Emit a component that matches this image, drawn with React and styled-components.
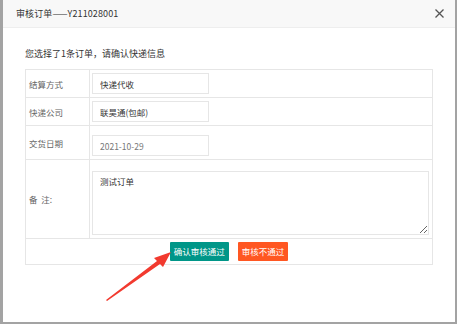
import React from 'react';
import styled, { createGlobalStyle } from 'styled-components';

const GlobalStyle = createGlobalStyle`
	html, body {
		margin: 0;
		padding: 0;
		background: #a3a3a3;
		font-family: "Microsoft YaHei", "Noto Sans CJK SC", "Liberation Sans", sans-serif;
	}
`;

const ROWS = [
	{ label: '结算方式', value: '快递代收', height: 28 },
	{ label: '快递公司', value: '联昊通(包邮)', height: 28 },
	{ label: '交货日期', value: '2021-10-29', height: 34, muted: true },
];

const App = () => {
	return (
		<>
			<GlobalStyle />
			<Page>
				<Modal>
					<Header>
						<Title>审核订单——Y211028001</Title>
						<CloseButton aria-label="close">
							<svg width="9" height="9" viewBox="0 0 9 9">
								<path d="M0.5 0.5 L8.5 8.5 M8.5 0.5 L0.5 8.5" stroke="#555" strokeWidth="1.3" />
							</svg>
						</CloseButton>
					</Header>
					<Body>
						<Intro>您选择了1条订单，请确认快递信息</Intro>
						<Table>
							<tbody>
								{ROWS.map(row => (
									<Row key={row.label} height={row.height}>
										<LabelCell>{row.label}</LabelCell>
										<FieldCell>
											<Input readOnly value={row.value} muted={row.muted} />
										</FieldCell>
									</Row>
								))}
								<Row height={79}>
									<LabelCell>备&nbsp;&nbsp;注:</LabelCell>
									<FieldCell>
										<Remark readOnly defaultValue="测试订单" />
									</FieldCell>
								</Row>
								<Row height={26}>
									<ActionCell colSpan={2}>
										<Actions>
											<ActionButton color="#009688">确认审核通过</ActionButton>
											<ActionButton color="#ff5722">审核不通过</ActionButton>
										</Actions>
									</ActionCell>
								</Row>
							</tbody>
						</Table>
					</Body>
					<Arrow width="70" height="52" viewBox="0 0 70 52">
						<polygon points="1,50 52,11 49,8 66,2 58,17 55,14 2,51" fill="#f23a2f" />
					</Arrow>
				</Modal>
			</Page>
		</>
	);
};

const Page = styled.div`
	width: 457px;
	height: 324px;
	padding-left: 3px;
	box-sizing: border-box;
`;

const Modal = styled.div`
	position: relative;
	width: 452px;
	height: 322px;
	background: #fff;
	display: flex;
	flex-direction: column;
`;

const Header = styled.div`
	height: 27px;
	display: flex;
	align-items: center;
	justify-content: space-between;
	padding: 0 10px 0 13px;
	background: #f8f8f8;
	border-bottom: 1px solid #eee;
`;

const Title = styled.div`
	font-size: 9px;
	color: #333;
	letter-spacing: 0.1px;
`;

const CloseButton = styled.div`
	display: flex;
	align-items: center;
	justify-content: center;
	width: 12px;
	height: 12px;
`;

const Body = styled.div`
	padding: 20px 20px 0 22px;
`;

const Intro = styled.div`
	font-size: 9px;
	color: #333;
	line-height: 12px;
	margin-bottom: 9px;
`;

const Table = styled.table`
	width: 408px;
	border-collapse: collapse;
	font-size: 8.5px;
`;

const Row = styled.tr`
	height: ${props => props.height}px;
`;

const LabelCell = styled.td`
	width: 60px;
	padding: 0 0 0 3px;
	border: 1px solid #e6e6e6;
	color: #666;
	vertical-align: middle;
`;

const FieldCell = styled.td`
	padding: 0 2px 3px 2px;
	border: 1px solid #e6e6e6;
	vertical-align: bottom;
	line-height: 0;
`;

const Input = styled.input`
	box-sizing: border-box;
	width: 117px;
	height: 21px;
	padding: 0 7px;
	border: 1px solid #e6e6e6;
	font-family: inherit;
	font-size: 8.5px;
	color: ${props => (props.muted ? '#777' : '#333')};
	outline: none;
`;

const Remark = styled.textarea`
	box-sizing: border-box;
	display: block;
	width: 337px;
	height: 64px;
	padding: 3px 7px;
	border: 1px solid #e6e6e6;
	font-family: inherit;
	font-size: 8.5px;
	line-height: 12px;
	color: #333;
	outline: none;
`;

const ActionCell = styled.td`
	border: 1px solid #e6e6e6;
	padding: 0;
	vertical-align: middle;
`;

const Actions = styled.div`
	display: flex;
	justify-content: center;
	gap: 9px;
	padding-bottom: 1px;
`;

const ActionButton = styled.div`
	height: 19px;
	padding: 0 4px;
	display: flex;
	align-items: center;
	background: ${props => props.color};
	color: #fff;
	font-size: 8.5px;
	border-radius: 1px;
`;

const Arrow = styled.svg`
	position: absolute;
	left: 102px;
	top: 250px;
`;

export default App;
